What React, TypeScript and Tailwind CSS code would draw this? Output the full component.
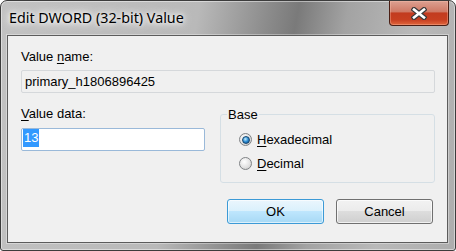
import React from "react";

function CloseGlyph() {
  return (
    <svg width="16" height="13" viewBox="0 0 16 13">
      <path d="M3 2.5 L13 10.5 M13 2.5 L3 10.5" stroke="#3a3a3a" strokeWidth="5" strokeLinecap="square" fill="none" />
      <path d="M3 2.5 L13 10.5 M13 2.5 L3 10.5" stroke="#ffffff" strokeWidth="2.6" strokeLinecap="square" fill="none" />
    </svg>
  );
}

function Radio({ checked, label }: { checked?: boolean; label: React.ReactNode }) {
  return (
    <div className="flex items-center h-[15px] gap-[5px]">
      <div className="w-[13px] h-[13px] rounded-full border border-[#7f8285] bg-[radial-gradient(circle_at_40%_35%,#ffffff,#e3e3e3_55%,#c4c4c4)] flex items-center justify-center">
        {checked && (
          <div className="w-[8px] h-[8px] rounded-full border border-[#17476f] bg-[radial-gradient(circle_at_40%_35%,#c6efff,#2b8cd3_50%,#0a4680)]" />
        )}
      </div>
      <span>{label}</span>
    </div>
  );
}

export default function App() {
  return (
    <div className="w-[456px] h-[251px] flex flex-col border border-[#3c3c3c] rounded-t-[7px] rounded-b-[3px] bg-[linear-gradient(100deg,#c2c2c2_0%,#b9b9b9_40%,#8c8c8c_54%,#7a7a7a_60%,#a3a3a3_70%,#b9b9b9_84%,#adadad_100%)] shadow-[inset_0_0_0_1px_rgba(255,255,255,0.45)] overflow-hidden font-['Liberation_Sans',Arial,sans-serif] text-[13px] leading-[15px] text-black">
      {/* title bar */}
      <div className="h-[34px] flex items-start justify-between pl-[8px] pr-[6px]">
        <div className="pt-[7px] font-['Noto_Sans',sans-serif] text-[14.3px] leading-[20px] [text-shadow:0_0_8px_#fff,0_0_12px_#fff,0_0_4px_#fff]">
          Edit DWORD (32-bit) Value
        </div>
        <div className="w-[60px] h-[25px] border-x border-b border-[#4a1e14] rounded-b-[4px] bg-[linear-gradient(to_bottom,#dca091_0%,#cf7965_45%,#c23b1f_50%,#c73f21_78%,#e0663c_100%)] shadow-[inset_0_0_0_1px_rgba(255,200,180,0.35)] flex items-center justify-center">
          <CloseGlyph />
        </div>
      </div>

      {/* client area */}
      <div className="flex-1 ml-[6px] mr-[7px] mb-[7px] border border-[#5c5c5c] bg-[#f0f0f0] shadow-[0_0_0_1px_rgba(255,255,255,0.35)] pt-[13px] pl-[13px] pr-[12px] flex flex-col">
        <div>
          Value <u className="underline-offset-2">n</u>ame:
        </div>
        <div className="mt-[6px] h-[23px] border border-[#d5d8db] rounded-[2px] bg-[#f0f0f0] flex items-center pl-[3px]">
          primary_h1806896425
        </div>

        <div className="mt-[13px] flex gap-[15px]">
          <div className="w-[184px] flex flex-col">
            <div>
              <u className="underline-offset-2">V</u>alue data:
            </div>
            <div className="mt-[7px] h-[23px] border border-[#9ab9d9] rounded-[2px] bg-white px-[1px] pt-0">
              <span className="inline-block bg-[#3399ff] text-white leading-[18px] px-[1px]">13</span>
            </div>
          </div>

          <fieldset className="mt-[1px] flex-1 h-[76px] border border-[#d5dfe5] rounded-[3px] p-0 m-0 min-w-0">
            <legend className="ml-[6px] px-[1px] leading-[15px]">Base</legend>
            <div className="mt-[10px] ml-[18px] flex flex-col gap-[9px]">
              <Radio checked label={<><u className="underline-offset-2">H</u>exadecimal</>} />
              <Radio label={<><u className="underline-offset-2">D</u>ecimal</>} />
            </div>
          </fieldset>
        </div>

        <div className="mt-[16px] mr-[2px] flex justify-end gap-[12px]">
          <button className="w-[97px] h-[25px] border border-[#3c9ad6] rounded-[3px] bg-[linear-gradient(to_bottom,#eaf6fd_0%,#d9f0fc_50%,#bee6fd_50%,#a7d9f5_100%)] shadow-[inset_0_0_0_1px_rgba(255,255,255,0.6)] text-[13px]">
            OK
          </button>
          <button className="w-[97px] h-[25px] border border-[#707070] rounded-[3px] bg-[linear-gradient(to_bottom,#f2f2f2_0%,#ebebeb_50%,#dddddd_50%,#cfcfcf_100%)] shadow-[inset_0_0_0_1px_rgba(255,255,255,0.7)] text-[13px]">
            Cancel
          </button>
        </div>
      </div>
    </div>
  );
}
